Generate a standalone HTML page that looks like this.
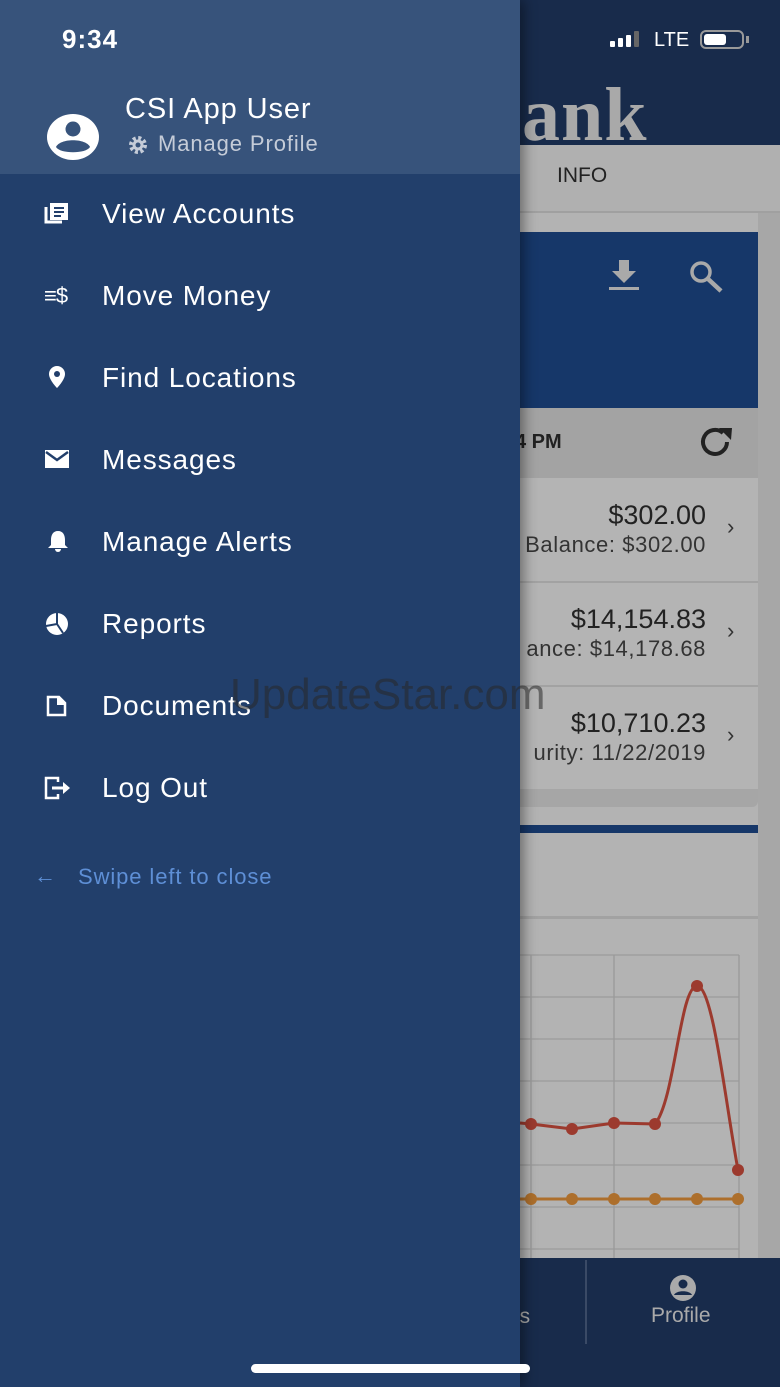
<!DOCTYPE html>
<html><head><meta charset="utf-8"><style>
*{margin:0;padding:0;box-sizing:border-box}
body{width:780px;height:1387px;position:relative;overflow:hidden;background:#b3b3b3;font-family:"Liberation Sans",sans-serif}
.abs{position:absolute}
.menu{position:absolute;left:102px;color:#fff;font-size:28px;letter-spacing:0.9px}
.ic{position:absolute;left:44px}
.amt{position:absolute;right:74px;font-size:27px;color:#222;white-space:nowrap}
.sub{position:absolute;right:74px;font-size:22px;color:#333;letter-spacing:0.6px;white-space:nowrap}
</style></head><body>
<div class="abs" style="left:0;top:0;width:780px;height:145px;background:#182b4b"></div>
<div class="abs" style="left:522px;top:72px;font-family:'Liberation Serif',serif;font-weight:bold;font-size:76px;color:#a9a9a9;letter-spacing:1px">ank</div>
<div class="abs" style="left:520px;top:145px;width:260px;height:68px;background:#b0b0b0;border-bottom:2px solid #a0a0a0"></div>
<div class="abs" style="left:557px;top:164px;font-size:21px;color:#222">INFO</div>
<div class="abs" style="left:758px;top:213px;width:22px;height:1045px;background:#a7a7a7"></div>
<div class="abs" style="left:520px;top:232px;width:238px;height:176px;background:#163769"></div>
<svg class="abs" style="left:605px;top:258px" width="40" height="36"><path d="M14 2h10v11h7L19 25 7 13h7z" fill="#a9a9a9"/><rect x="4" y="29" width="30" height="3" fill="#a9a9a9"/></svg>
<svg class="abs" style="left:686px;top:259px" width="42" height="34"><circle cx="15" cy="13" r="9" stroke="#a9a9a9" stroke-width="3.5" fill="none"/><path d="M21 19l14 13" stroke="#a9a9a9" stroke-width="4.5"/></svg>
<div class="abs" style="left:520px;top:408px;width:238px;height:70px;background:#a3a3a3"></div>
<div class="abs" style="left:515px;top:431px;font-size:20px;color:#222;font-weight:bold">4 PM</div>
<svg class="abs" style="left:697px;top:424px" width="40" height="34"><path d="M30 18a12 12 0 1 1-4-9" stroke="#222" stroke-width="4" fill="none"/><path d="M22 4l13 0-1 12z" fill="#222"/></svg>
<div class="abs" style="left:520px;top:478px;width:238px;height:312px;background:#b4b4b4"></div>
<div class="abs" style="left:520px;top:581px;width:238px;height:2px;background:#a2a2a2"></div>
<div class="abs" style="left:520px;top:685px;width:238px;height:2px;background:#a2a2a2"></div>
<div class="abs" style="left:520px;top:789px;width:238px;height:18px;background:#a6a6a6;border-radius:0 0 6px 0"></div>
<div class="amt" style="top:500px">$302.00</div>
<div class="sub" style="top:532px">Balance: $302.00</div>
<div class="amt" style="top:604px">$14,154.83</div>
<div class="sub" style="top:636px">ance: $14,178.68</div>
<div class="amt" style="top:708px">$10,710.23</div>
<div class="sub" style="top:740px">urity: 11/22/2019</div>
<div class="abs" style="left:727px;top:514px;font-size:22px;color:#333">›</div>
<div class="abs" style="left:727px;top:618px;font-size:22px;color:#333">›</div>
<div class="abs" style="left:727px;top:722px;font-size:22px;color:#333">›</div>
<div class="abs" style="left:520px;top:825px;width:238px;height:8px;background:#163769"></div>
<div class="abs" style="left:520px;top:916px;width:238px;height:3px;background:#a2a2a2"></div>
<svg class="abs" style="left:520px;top:950px" width="240" height="310">
<g stroke="#9a9a9a" stroke-width="1.3">
<line x1="11" y1="5" x2="11" y2="308"/><line x1="94" y1="5" x2="94" y2="308"/><line x1="219" y1="5" x2="219" y2="308"/>
<line x1="0" y1="5" x2="219" y2="5"/><line x1="0" y1="47" x2="219" y2="47"/><line x1="0" y1="89" x2="219" y2="89"/><line x1="0" y1="131" x2="219" y2="131"/><line x1="0" y1="173" x2="219" y2="173"/><line x1="0" y1="215" x2="219" y2="215"/><line x1="0" y1="257" x2="219" y2="257"/><line x1="0" y1="299" x2="219" y2="299"/></g>
<path d="M0 173L11 174L52 179L94 173L135 174C155 150 160 36 177 36C193 36 205 150 218 220" stroke="#9c3a2e" stroke-width="3" fill="none"/>
<g fill="#9c3a2e"><circle cx="11" cy="174" r="6"/><circle cx="52" cy="179" r="6"/><circle cx="94" cy="173" r="6"/><circle cx="135" cy="174" r="6"/><circle cx="177" cy="36" r="6"/><circle cx="218" cy="220" r="6"/></g>
<line x1="0" y1="249" x2="218" y2="249" stroke="#ad6f2c" stroke-width="3"/>
<g fill="#ad6f2c"><circle cx="11" cy="249" r="6"/><circle cx="52" cy="249" r="6"/><circle cx="94" cy="249" r="6"/><circle cx="135" cy="249" r="6"/><circle cx="177" cy="249" r="6"/><circle cx="218" cy="249" r="6"/></g>
</svg>
<div class="abs" style="left:0;top:1258px;width:780px;height:129px;background:#182b4b"></div>
<div class="abs" style="left:585px;top:1260px;width:2px;height:84px;background:#3a4a66"></div>
<div class="abs" style="left:508px;top:1305px;font-size:21px;color:#aaa">ns</div>
<svg class="abs" style="left:667px;top:1274px" width="32" height="28"><circle cx="16" cy="14" r="13" fill="#aaa"/><circle cx="16" cy="10" r="4.5" fill="#182b4b"/><path d="M7 21c2-5 16-5 18 0z" fill="#182b4b"/></svg>
<div class="abs" style="left:651px;top:1304px;font-size:21px;color:#aaa">Profile</div>
<div class="abs" style="left:610px;top:30px;width:40px;height:18px">
<div class="abs" style="left:0;top:11px;width:5px;height:6px;background:#fff;border-radius:1px"></div>
<div class="abs" style="left:8px;top:8px;width:5px;height:9px;background:#fff;border-radius:1px"></div>
<div class="abs" style="left:16px;top:5px;width:5px;height:12px;background:#fff;border-radius:1px"></div>
<div class="abs" style="left:24px;top:1px;width:5px;height:16px;background:#666;border-radius:1px"></div></div>
<div class="abs" style="left:654px;top:29px;font-size:20px;color:#fff">LTE</div>
<div class="abs" style="left:700px;top:30px;width:44px;height:19px;border:2px solid #999;border-radius:6px"><div style="margin:2px;width:22px;height:11px;background:#fff;border-radius:3px"></div></div>
<div class="abs" style="left:746px;top:36px;width:3px;height:7px;background:#999"></div>
<!-- drawer -->
<div class="abs" style="left:0;top:0;width:520px;height:1387px;background:#223f6b;box-shadow:4px 0 12px rgba(0,0,0,0.4)"></div>
<div class="abs" style="left:0;top:0;width:520px;height:174px;background:#37537b"></div>
<div class="abs" style="left:62px;top:24px;font-size:26px;color:#fff;font-weight:bold;letter-spacing:1px">9:34</div>
<svg class="abs" style="left:46px;top:114px" width="54" height="46"><ellipse cx="27" cy="23" rx="26" ry="23" fill="#fff"/><circle cx="27" cy="15" r="7.5" fill="#37537b"/><path d="M10 33c4-9 30-9 34 0c-4 7-30 7-34 0z" fill="#37537b"/></svg>
<div class="abs" style="left:125px;top:93px;font-size:29px;color:#fff;letter-spacing:0.9px">CSI App User</div>
<svg class="abs" style="left:127px;top:135px" width="22" height="20"><circle cx="11" cy="10" r="7" fill="none" stroke="#c5ccd8" stroke-width="4" stroke-dasharray="3 2.5"/><circle cx="11" cy="10" r="5.5" fill="#c5ccd8"/><circle cx="11" cy="10" r="2.5" fill="#37537b"/></svg>
<div class="abs" style="left:158px;top:131px;font-size:22px;color:#c5ccd8;letter-spacing:0.9px">Manage Profile</div>

<svg class="ic" style="top:202px" width="26" height="24"><path d="M2 5v15h16" stroke="#fff" stroke-width="3" fill="none"/><rect x="6" y="1" width="18" height="17" fill="#fff"/><g stroke="#223f6b" stroke-width="2"><line x1="10" y1="6" x2="20" y2="6"/><line x1="10" y1="10" x2="20" y2="10"/><line x1="10" y1="14" x2="17" y2="14"/></g></svg>
<div class="menu" style="top:198px">View Accounts</div>
<div class="ic" style="top:283px;color:#fff;font-size:22px;letter-spacing:-1px">≡$</div>
<div class="menu" style="top:280px">Move Money</div>
<svg class="ic" style="top:365px;left:48px" width="18" height="24"><path d="M9 1a8 8 0 0 1 8 8c0 6-8 14-8 14S1 15 1 9a8 8 0 0 1 8-8z" fill="#fff"/><circle cx="9" cy="9" r="3" fill="#223f6b"/></svg>
<div class="menu" style="top:362px">Find Locations</div>
<svg class="ic" style="top:449px" width="26" height="20"><rect x="1" y="1" width="24" height="18" fill="#fff"/><path d="M2 3l11 8 11-8" stroke="#223f6b" stroke-width="2.5" fill="none"/></svg>
<div class="menu" style="top:444px">Messages</div>
<svg class="ic" style="top:529px;left:46px" width="24" height="24"><path d="M12 2c5 0 7 4 7 9v5l3 3H2l3-3v-5c0-5 2-9 7-9z" fill="#fff"/><path d="M9 20h6a3 3 0 0 1-6 0z" fill="#fff"/></svg>
<div class="menu" style="top:526px">Manage Alerts</div>
<svg class="ic" style="top:613px;left:45px" width="24" height="22"><circle cx="12" cy="11" r="11" fill="#fff"/><path d="M12 11V0M12 11L1 13M12 11l6 9" stroke="#223f6b" stroke-width="2"/></svg>
<div class="menu" style="top:608px">Reports</div>
<svg class="ic" style="top:695px;left:46px" width="22" height="22"><path d="M2 2h11l6 6v12H2z" stroke="#fff" stroke-width="2.5" fill="none"/><path d="M12 2v7h7" fill="#fff" stroke="#fff" stroke-width="2"/></svg>
<div class="menu" style="top:690px">Documents</div>
<svg class="ic" style="top:776px" width="28" height="24"><path d="M14 6V2H2v20h12v-4" stroke="#fff" stroke-width="2.5" fill="none"/><path d="M8 12h12" stroke="#fff" stroke-width="3"/><path d="M19 6l7 6-7 6z" fill="#fff"/></svg>
<div class="menu" style="top:772px">Log Out</div>
<div class="abs" style="left:34px;top:863px;font-size:22px;color:#5e8fd6">←</div>
<div class="abs" style="left:78px;top:864px;font-size:22px;color:#5e8fd6;letter-spacing:0.9px">Swipe left to close</div>
<div class="abs" style="left:230px;top:670px;font-size:44px;color:rgba(40,40,40,0.55)">UpdateStar.com</div>
<div class="abs" style="left:251px;top:1364px;width:279px;height:9px;background:#fff;border-radius:5px"></div>
</body></html>
